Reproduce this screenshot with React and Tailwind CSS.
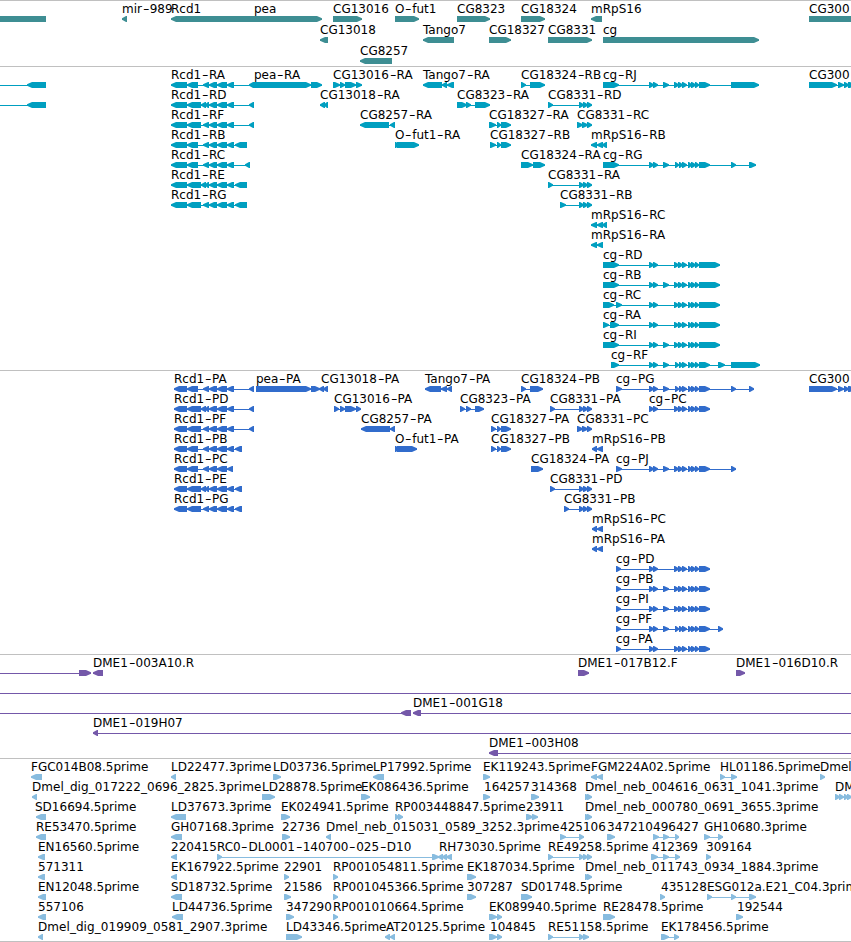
import clsx from "clsx";

const VIEW_WIDTH = 851;

// Groups of exons shared by several transcripts
const RCD1_TAIL = [[209, 217], [217, 227], [227, 234]];
const CG8331_END = [[579, 584], [583, 588], [587, 592]];
const CG18327_END = [[497, 501], [501, 511]];
const CG_PAIR = [[649, 654], [653, 658]];
const CG_MID = [[674, 679], [678, 683], [682, 687], [688, 692], [691, 696], [695, 699]];
const CG_MID_B = [[675, 679], [679, 683], [682, 687], [688, 692], [691, 696], [695, 699]];
const CG_SKIP = [663, 669];
const CG300 = [[809, 837], [838, 844], [844, 849], [848, 855]];
const DMEL_NEB = [[585, 590], [587, 592]];

// A feature is [label, label x, direction, exons, line start, line end]
const genes = [
  [
    ["", 0, "", [[-5, 46]]],
    ["mir-989", 122, "L", [[122, 127]]],
    ["Rcd1", 171, "L", [[171, 254]]],
    ["pea", 254, "R", [[254, 322]]],
    ["CG13016", 333, "R", [[333, 362]]],
    ["O-fut1", 395, "R", [[395, 419]]],
    ["CG8323", 457, "R", [[457, 490]]],
    ["CG18324", 521, "R", [[521, 545]]],
    ["mRpS16", 591, "L", [[591, 602]]],
    ["CG300", 809, "", [[809, 855]]],
  ],
  [
    ["CG13018", 320, "L", [[320, 328]]],
    ["Tango7", 423, "L", [[423, 454]]],
    ["CG18327", 489, "R", [[489, 511]]],
    ["CG8331", 548, "R", [[548, 592]]],
    ["cg", 603, "R", [[603, 759]]],
  ],
  [["CG8257", 360, "L", [[360, 392]]]],
];

const transcripts = [
  [
    ["", 0, "L", [[27, 46]], 0],
    ["Rcd1-RA", 171, "L", [[171, 187], [187, 198], [203, 209], ...RCD1_TAIL, [249, 254]]],
    ["pea-RA", 254, "R", [[254, 311], [311, 322]]],
    ["CG13016-RA", 333, "R", [[333, 340], [340, 345], [345, 356], [356, 362]]],
    ["Tango7-RA", 423, "L", [[423, 442], [442, 447], [447, 454]]],
    ["CG18324-RB", 521, "R", [[521, 526], [530, 545]]],
    ["cg-RJ", 603, "R", [[603, 619], ...CG_PAIR, CG_SKIP, ...CG_MID, [699, 710], [731, 759]]],
    ["CG300", 809, "R", CG300],
  ],
  [
    ["", 0, "L", [[27, 46]], 0],
    ["Rcd1-RD", 171, "L", [[171, 187], [187, 201], [201, 206], [205, 209], ...RCD1_TAIL, [249, 254]]],
    ["CG13018-RA", 320, "L", [[320, 325], [324, 328]]],
    ["CG8323-RA", 457, "R", [[457, 467], [466, 471], [475, 490]]],
    ["CG8331-RD", 548, "R", [[548, 553], ...CG8331_END]],
  ],
  [
    ["Rcd1-RF", 171, "L", [[171, 187], [187, 201], [203, 209], ...RCD1_TAIL, [249, 254]]],
    ["CG8257-RA", 360, "L", [[360, 389], [390, 395]]],
    ["CG18327-RA", 489, "R", [[489, 496], ...CG18327_END]],
    ["CG8331-RC", 577, "R", [[577, 583], [582, 588], [587, 592]]],
  ],
  [
    ["Rcd1-RB", 171, "L", [[171, 187], [187, 198], [203, 209], ...RCD1_TAIL, [235, 247]]],
    ["O-fut1-RA", 395, "R", [[395, 399], [397, 419]]],
    ["CG18327-RB", 490, "R", [[490, 496], ...CG18327_END]],
    ["mRpS16-RB", 591, "L", [[591, 597], [597, 603], [602, 607]]],
  ],
  [
    ["Rcd1-RC", 171, "L", [[171, 187], [187, 198], [203, 209], ...RCD1_TAIL, [245, 250]]],
    ["CG18324-RA", 521, "R", [[521, 533], [533, 545]]],
    ["cg-RG", 603, "R", [[603, 619], ...CG_PAIR, CG_SKIP, ...CG_MID_B, [699, 710], [731, 736], [749, 756]]],
  ],
  [
    ["Rcd1-RE", 171, "L", [[171, 187], [187, 201], [201, 206], [205, 209], ...RCD1_TAIL, [235, 247]]],
    ["CG8331-RA", 548, "R", [[548, 553], ...CG8331_END]],
  ],
  [
    ["Rcd1-RG", 171, "L", [[171, 187], [187, 201], [203, 209], ...RCD1_TAIL, [235, 247]]],
    ["CG8331-RB", 560, "R", [[560, 566], ...CG8331_END]],
  ],
  [["mRpS16-RC", 591, "L", [[591, 597], [597, 603], [602, 607]]]],
  [["mRpS16-RA", 591, "L", [[591, 597], [597, 603]]]],
  [["cg-RD", 603, "R", [[603, 619], ...CG_PAIR, ...CG_MID, [699, 720]]]],
  [["cg-RB", 603, "R", [[603, 619], ...CG_PAIR, CG_SKIP, ...CG_MID, [699, 720]]]],
  [["cg-RC", 603, "R", [[603, 614], [616, 622], ...CG_PAIR, ...CG_MID, [699, 720]]]],
  [["cg-RA", 603, "R", [[603, 609], [610, 619], ...CG_PAIR, ...CG_MID, [699, 720]]]],
  [["cg-RI", 603, "R", [[603, 619], ...CG_PAIR, CG_SKIP, ...CG_MID, [699, 720]]]],
  [["cg-RF", 611, "R", [[611, 619], ...CG_PAIR, CG_SKIP, ...CG_MID_B, [699, 710], [718, 725], [731, 760]]]],
];

const proteins = [
  [
    ["Rcd1-PA", 174, "L", [[174, 187], [187, 198], [203, 209], ...RCD1_TAIL, [249, 254]]],
    ["pea-PA", 256, "R", [[256, 311], [311, 320]]],
    ["CG13018-PA", 321, "L", [[319, 324], [323, 328]]],
    ["Tango7-PA", 425, "L", [[425, 441], [441, 447], [447, 452]]],
    ["CG18324-PB", 521, "R", [[521, 526], [530, 543]]],
    ["cg-PG", 616, "R", [[616, 622], ...CG_PAIR, CG_SKIP, ...CG_MID_B, [699, 710], [731, 736], [749, 754]]],
    ["CG300", 809, "R", CG300],
  ],
  [
    ["Rcd1-PD", 174, "L", [[174, 187], [187, 201], [201, 206], [205, 209], ...RCD1_TAIL, [249, 254]]],
    ["CG13016-PA", 334, "R", [[334, 339], [340, 345], [345, 356], [356, 361]]],
    ["CG8323-PA", 460, "R", [[460, 465], [466, 471], [475, 484]]],
    ["CG8331-PA", 550, "R", [[550, 555], ...CG8331_END]],
    ["cg-PC", 649, "R", [...CG_PAIR, ...CG_MID, [699, 710]]],
  ],
  [
    ["Rcd1-PF", 174, "L", [[174, 187], [187, 201], [203, 209], ...RCD1_TAIL, [249, 254]]],
    ["CG8257-PA", 361, "L", [[361, 390], [390, 395]]],
    ["CG18327-PA", 491, "R", [[491, 496], ...CG18327_END]],
    ["CG8331-PC", 577, "R", [[577, 583], [582, 588], [587, 592]]],
  ],
  [
    ["Rcd1-PB", 174, "L", [[174, 187], [187, 198], [203, 209], ...RCD1_TAIL, [235, 242]]],
    ["O-fut1-PA", 395, "R", [[395, 399], [397, 417]]],
    ["CG18327-PB", 491, "R", [[491, 496], ...CG18327_END]],
    ["mRpS16-PB", 592, "L", [[592, 597], [597, 603]]],
  ],
  [
    ["Rcd1-PC", 174, "L", [[174, 187], [187, 198], [203, 209], [209, 217], [217, 227], [227, 233]]],
    ["CG18324-PA", 531, "R", [[531, 543]]],
    ["cg-PJ", 616, "R", [[616, 622], ...CG_PAIR, CG_SKIP, ...CG_MID, [699, 710], [731, 736]]],
  ],
  [
    ["Rcd1-PE", 174, "L", [[174, 187], [187, 201], [201, 206], [205, 209], ...RCD1_TAIL, [235, 242]]],
    ["CG8331-PD", 550, "R", [[550, 555], ...CG8331_END]],
  ],
  [
    ["Rcd1-PG", 174, "L", [[174, 187], [187, 201], [203, 209], ...RCD1_TAIL, [235, 242]]],
    ["CG8331-PB", 564, "R", [[564, 569], ...CG8331_END]],
  ],
  [["mRpS16-PC", 592, "L", [[592, 597], [597, 603]]]],
  [["mRpS16-PA", 592, "L", [[592, 597], [597, 603]]]],
  [["cg-PD", 616, "R", [[616, 621], ...CG_PAIR, ...CG_MID, [699, 710]]]],
  [["cg-PB", 616, "R", [[616, 621], ...CG_PAIR, CG_SKIP, ...CG_MID, [699, 710]]]],
  [["cg-PI", 616, "R", [[616, 621], ...CG_PAIR, CG_SKIP, ...CG_MID, [699, 710]]]],
  [["cg-PF", 616, "R", [[616, 621], ...CG_PAIR, CG_SKIP, ...CG_MID_B, [699, 710], [718, 723]]]],
  [["cg-PA", 616, "R", [[616, 621], ...CG_PAIR, ...CG_MID, [699, 710]]]],
];

const clones = [
  [
    ["", 0, "R", [[79, 91]], 0],
    ["DME1-003A10.R", 93, "L", [[93, 103]]],
    ["DME1-017B12.F", 578, "R", [[578, 589]]],
    ["DME1-016D10.R", 736, "R", [[736, 745]]],
  ],
  [["", 0, "", [], 0, VIEW_WIDTH]],
  [
    ["", 0, "L", [[401, 411]], 0],
    ["DME1-001G18", 413, "L", [[413, 421]], 413, VIEW_WIDTH],
  ],
  [["DME1-019H07", 93, "L", [[93, 98]], 93, VIEW_WIDTH]],
  [["DME1-003H08", 489, "L", [[489, 498]], 489, VIEW_WIDTH]],
];

const ests = [
  [
    ["FGC014B08.5prime", 31, "L", [[31, 42]]],
    ["LD22477.3prime", 171, "L", [[171, 176]]],
    ["LD03736.5prime", 273, "R", [[273, 281]]],
    ["LP17992.5prime", 373, "L", [[373, 384]]],
    ["EK119243.5prime", 483, "R", [[483, 490]]],
    ["FGM224A02.5prime", 591, "L", [[591, 597], [597, 603]]],
    ["HL01186.5prime", 720, "R", [[720, 725], [731, 737]]],
    ["Dmel", 820, "R", [[820, 825]]],
  ],
  [
    ["Dmel_dig_017222_0696_2825.3prime", 32, "L", [[32, 37]]],
    ["LD28878.5prime", 262, "R", [[262, 275]]],
    ["EK086436.5prime", 361, "R", [[361, 370]]],
    ["164257", 484, "R", [[483, 490]]],
    ["314368", 531, "R", [[531, 539]]],
    ["Dmel_neb_004616_0631_1041.3prime", 585, "R", DMEL_NEB],
    ["DM", 835, "R", [[835, 840], [839, 844], [844, 848], [847, 852]]],
  ],
  [
    ["SD16694.5prime", 35, "L", [[36, 46]]],
    ["LD37673.3prime", 171, "L", [[171, 186]]],
    ["EK024941.5prime", 281, "R", [[281, 290]]],
    ["RP003448847.5prime", 395, "R", [[395, 399], [398, 403]]],
    ["23911", 526, "R", [[526, 533], [532, 538]]],
    ["Dmel_neb_000780_0691_3655.3prime", 585, "R", DMEL_NEB],
  ],
  [
    ["RE53470.5prime", 36, "L", [[36, 46]]],
    ["GH07168.3prime", 171, "L", [[171, 182]]],
    ["22736", 282, "R", [[282, 290]]],
    ["Dmel_neb_015031_0589_3252.3prime", 326, "L", [[326, 331]]],
    ["425106", 560, "R", [[560, 566], [579, 584]]],
    ["347210", 607, "R", [[607, 615]]],
    ["496427", 653, "R", [[653, 659], [663, 669], [675, 679]]],
    ["GH10680.3prime", 704, "R", [[704, 710], [718, 723]]],
  ],
  [
    ["EN16560.5prime", 38, "L", [[38, 45]]],
    ["220415", 171, "L", [[171, 177]]],
    ["RC0-DL0001-140700-025-D10", 217, "R", [[217, 222], [432, 439]]],
    ["RH73030.5prime", 439, "L", [[438, 443], [442, 447], [446, 452]]],
    ["RE49258.5prime", 548, "R", [[548, 553], ...CG8331_END]],
    ["412369", 652, "R", [[651, 658], [663, 669], [675, 680]]],
    ["309164", 706, "R", [[706, 711]]],
  ],
  [
    ["571311", 38, "L", [[38, 45]]],
    ["EK167922.5prime", 171, "L", [[171, 177]]],
    ["22901", 284, "R", [[284, 289]]],
    ["RP001054811.5prime", 333, "R", [[333, 338]]],
    ["EK187034.5prime", 467, "R", [[467, 476]]],
    ["Dmel_neb_011743_0934_1884.3prime", 585, "R", DMEL_NEB],
  ],
  [
    ["EN12048.5prime", 38, "L", [[38, 46]]],
    ["SD18732.5prime", 171, "L", [[171, 182]]],
    ["21586", 284, "R", [[284, 291]]],
    ["RP001045366.5prime", 333, "R", [[333, 338]]],
    ["307287", 467, "R", [[467, 476]]],
    ["SD01748.5prime", 521, "R", [[521, 532]]],
    ["435128", 661, "R", [[660, 665]]],
    ["ESG012a.E21_C04.3prim", 707, "R", [[707, 712], [731, 736], [749, 756]]],
  ],
  [
    ["557106", 38, "L", [[38, 46]]],
    ["LD44736.5prime", 172, "L", [[172, 183]]],
    ["347290", 286, "R", [[286, 294]]],
    ["RP001010664.5prime", 333, "R", [[333, 338]]],
    ["EK089940.5prime", 489, "R", [[489, 497], [497, 502]]],
    ["RE28478.5prime", 603, "R", [[603, 615]]],
    ["192544", 737, "R", [[736, 743]]],
  ],
  [
    ["Dmel_dig_019909_0581_2907.3prime", 38, "L", [[38, 43]]],
    ["LD43346.5prime", 286, "R", [[286, 302]]],
    ["AT20125.5prime", 386, "L", [[385, 390], [390, 395]]],
    ["104845", 490, "R", [[489, 497], [497, 502]]],
    ["RE51158.5prime", 548, "R", [[548, 553], [579, 584], [583, 589]]],
    ["EK178456.5prime", 661, "R", [[661, 669], [674, 679]]],
  ],
];

// Bar with a pointed end on the side the strand runs to
function exonPoints(start, end, dir) {
  const tip = Math.min(5, end - start - 1);
  if (dir === "L") {
    return `${end},0 ${start + tip},0 ${start},2.3 ${start},3.7 ${start + tip},6 ${end},6`;
  }
  if (dir === "R") {
    return `${start},0 ${end - tip},0 ${end},2.3 ${end},3.7 ${end - tip},6 ${start},6`;
  }
  return `${start},0 ${end},0 ${end},6 ${start},6`;
}

function Glyph({ feature }) {
  const [, , dir, exons, from, to] = feature;
  const start = from ?? exons[0][0];
  const end = to ?? exons[exons.length - 1][1];
  return (
    <g>
      <rect x={start} y="3" width={end - start} height="1" />
      {exons.map(([a, b]) => (
        <polygon key={a} points={exonPoints(a, b, dir)} />
      ))}
    </g>
  );
}

function Label({ text, x }) {
  return (
    <span
      className={clsx(
        "absolute top-px whitespace-nowrap",
        text.startsWith("Dmel_") && "tracking-[0.06px]"
      )}
      style={{ left: x }}
    >
      {text.split("-").map((part, i) => (
        <span key={i}>
          {i > 0 && <span className="mx-[1.7px] inline-block scale-x-150">-</span>}
          {part}
        </span>
      ))}
    </span>
  );
}

function Track({ rows, color, rowClass = "h-5", className = "pb-[3px]" }) {
  return (
    <section className={clsx("border-t border-[#c0c0c0]", className)}>
      {rows.map((features, i) => (
        <div key={i} className={clsx("relative pt-[15px]", rowClass)}>
          <svg width={VIEW_WIDTH} height="6" className={clsx("block", color)}>
            {features.map((f, j) => (
              <Glyph key={j} feature={f} />
            ))}
          </svg>
          {features.map((f, j) => f[0] && <Label key={j} text={f[0]} x={f[1]} />)}
        </div>
      ))}
    </section>
  );
}

export default function App() {
  return (
    <main className="h-[942px] w-[851px] overflow-hidden bg-white font-['DejaVu_Sans',sans-serif] text-[12px] leading-[15px] text-black">
      <Track rows={genes} color="fill-[#3e8e93]" rowClass="h-[21px]" className="pb-[2px]" />
      <Track rows={transcripts} color="fill-[#009fc0]" />
      <Track rows={proteins} color="fill-[#316ccc]" />
      <Track rows={clones} color="fill-[#7458a9]" />
      <Track rows={ests} color="fill-[#88bcdf]" className="border-b pb-[2px]" />
    </main>
  );
}
